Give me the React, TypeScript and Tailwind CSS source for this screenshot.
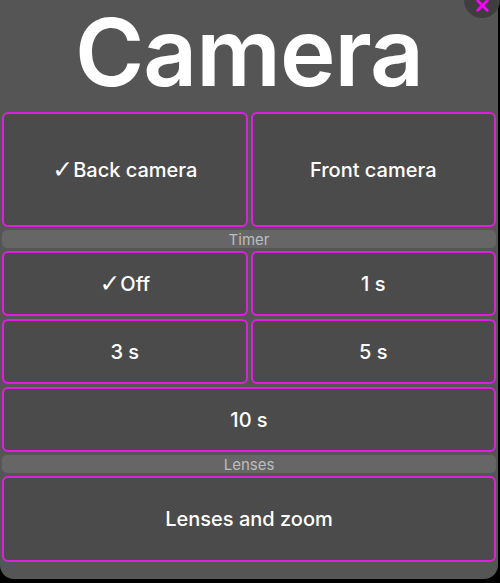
import { X } from 'lucide-react';

const font = { fontFamily: 'Inter, "Noto Sans", sans-serif' };

function OptionButton({ label, selected = false, className = '' }: { label: string; selected?: boolean; className?: string }) {
    return (
        <button className={`flex items-center justify-center rounded-[6px] border-2 border-[#e01ee0] bg-[#4b4b4b] text-[20px] font-medium text-white ${className}`}>
            {selected && <span className="font-['DejaVu_Sans'] text-[25px] font-normal leading-none">✓</span>}
            {label}
        </button>
    );
}

function SectionLabel({ text }: { text: string }) {
    return (
        <div className="flex h-[18px] items-center justify-center rounded-[5px] bg-[#666666] text-[15px] leading-none text-[#bdbdbd]">
            {text}
        </div>
    );
}

export default function App() {
    return (
        <div className="min-h-[583px] w-[500px] bg-black" style={font}>
            <div className="relative flex w-[498px] flex-col gap-[3px] rounded-b-[14px] bg-[#555555] px-[2px] pb-[17px]">
                {/* Close */}
                <button className="absolute left-[464px] top-[-18px] flex h-[36px] w-[36px] items-end justify-center rounded-full bg-[#3e3e3e] pb-[3px]">
                    <X size={19} strokeWidth={3.5} className="text-[#ff00ff]" />
                </button>

                <h1 className="pb-[7px] pt-[2px] text-center text-[94px] font-semibold leading-[100px] tracking-[-1px] text-white">
                    Camera
                </h1>

                <div className="grid grid-cols-2 gap-[3px]">
                    <OptionButton label="Back camera" selected className="h-[115px]" />
                    <OptionButton label="Front camera" className="h-[115px]" />
                </div>

                <SectionLabel text="Timer" />

                <div className="grid grid-cols-2 gap-[3px]">
                    <OptionButton label="Off" selected className="h-[65px]" />
                    <OptionButton label="1 s" className="h-[65px]" />
                    <OptionButton label="3 s" className="h-[65px]" />
                    <OptionButton label="5 s" className="h-[65px]" />
                    <OptionButton label="10 s" className="col-span-2 h-[65px]" />
                </div>

                <SectionLabel text="Lenses" />

                <OptionButton label="Lenses and zoom" className="h-[86px]" />
            </div>
        </div>
    );
}
